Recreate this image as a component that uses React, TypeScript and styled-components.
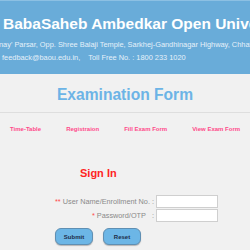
import React from "react";
import styled, { createGlobalStyle } from "styled-components";

const GlobalStyle = createGlobalStyle`
  html, body {
    margin: 0;
    padding: 0;
    background: #f1f1f1;
    font-family: "Liberation Sans", Arial, sans-serif;
    overflow: hidden;
  }
`;

const Page = styled.div`
  width: 250px;
  height: 250px;
  overflow: hidden;
  background: #f1f1f1;
`;

const Header = styled.header`
  height: 74px;
  background: #69acd9;
  border-top: 1px solid #8cc0e3;
  box-sizing: border-box;
  padding-top: 15px;
  color: #ffffff;
  overflow: hidden;
  white-space: nowrap;
`;

const UniName = styled.h1`
  margin: 0 0 0 3px;
  font-size: 15.5px;
  line-height: 16px;
  font-weight: bold;
`;

const InfoLine = styled.div<{ $indent: number; $top: number }>`
  margin: ${(p) => p.$top}px 0 0 ${(p) => p.$indent}px;
  font-size: 7.4px;
  line-height: 9px;
  color: #e6f1f9;
`;

const Body = styled.main`
  display: flex;
  flex-direction: column;
`;

const FormTitle = styled.h2`
  margin: 0;
  padding: 12px 0 0;
  height: 39px;
  box-sizing: border-box;
  text-align: center;
  font-size: 15.6px;
  line-height: 18px;
  font-weight: bold;
  color: #6cb4e6;
  border-bottom: 1px solid #dedede;
`;

const Nav = styled.nav`
  display: flex;
  align-items: center;
  height: 32px;
  padding-left: 10px;
  gap: 25px;
`;

const NavLink = styled.a`
  font-size: 6px;
  font-weight: bold;
  color: #ff4a8a;
  text-decoration: none;
  white-space: nowrap;
`;

const SignIn = styled.h3`
  margin: 22px 0 0 80px;
  font-size: 11px;
  line-height: 12px;
  font-weight: bold;
  color: #ff2424;
`;

const FormGrid = styled.div`
  display: grid;
  grid-template-columns: 100px 62px;
  column-gap: 2px;
  row-gap: 1px;
  margin: 16px 0 0 54px;
  align-items: center;
`;

const Label = styled.label`
  text-align: right;
  font-size: 7.3px;
  color: #8a8a8a;
  white-space: nowrap;
`;

const Star = styled.span`
  color: #ff4a4a;
`;

const Input = styled.input`
  width: 62px;
  height: 13px;
  box-sizing: border-box;
  border: 1px solid #cfcfcf;
  background: #ffffff;
  padding: 0;
  margin: 0;
`;

const Buttons = styled.div`
  display: flex;
  gap: 10px;
  margin: 6px 0 0 55px;
`;

const Button = styled.button`
  width: 38px;
  height: 17px;
  padding: 0;
  border: 1px solid #5f8fb3;
  border-radius: 6px;
  background: #6cb6e6;
  box-shadow: 0 1px 1px rgba(0, 0, 0, 0.25);
  color: #1c2c48;
  font-family: "Liberation Sans", Arial, sans-serif;
  font-size: 6px;
  font-weight: bold;
`;

export default function App() {
  return (
    <Page>
      <GlobalStyle />
      <Header>
        <UniName>BabaSaheb Ambedkar Open University</UniName>
        <InfoLine $indent={-1} $top={8}>
          nay' Parsar, Opp. Shree Balaji Temple, Sarkhej-Gandhinagar Highway, Chhatral
        </InfoLine>
        <InfoLine $indent={2} $top={4}>
          feedback@baou.edu.in,&nbsp;&nbsp;&nbsp; Toll Free No. : 1800 233 1020
        </InfoLine>
      </Header>
      <Body>
        <FormTitle>Examination Form</FormTitle>
        <Nav>
          <NavLink href="#">Time-Table</NavLink>
          <NavLink href="#">Registraion</NavLink>
          <NavLink href="#">Fill Exam Form</NavLink>
          <NavLink href="#">View Exam Form</NavLink>
        </Nav>
        <SignIn>Sign In</SignIn>
        <FormGrid>
          <Label>
            <Star>** </Star>User Name/Enrollment No. :
          </Label>
          <Input type="text" />
          <Label>
            <Star>* </Star>Password/OTP&nbsp;&nbsp;&nbsp;:
          </Label>
          <Input type="password" />
        </FormGrid>
        <Buttons>
          <Button>Submit</Button>
          <Button>Reset</Button>
        </Buttons>
      </Body>
    </Page>
  );
}
